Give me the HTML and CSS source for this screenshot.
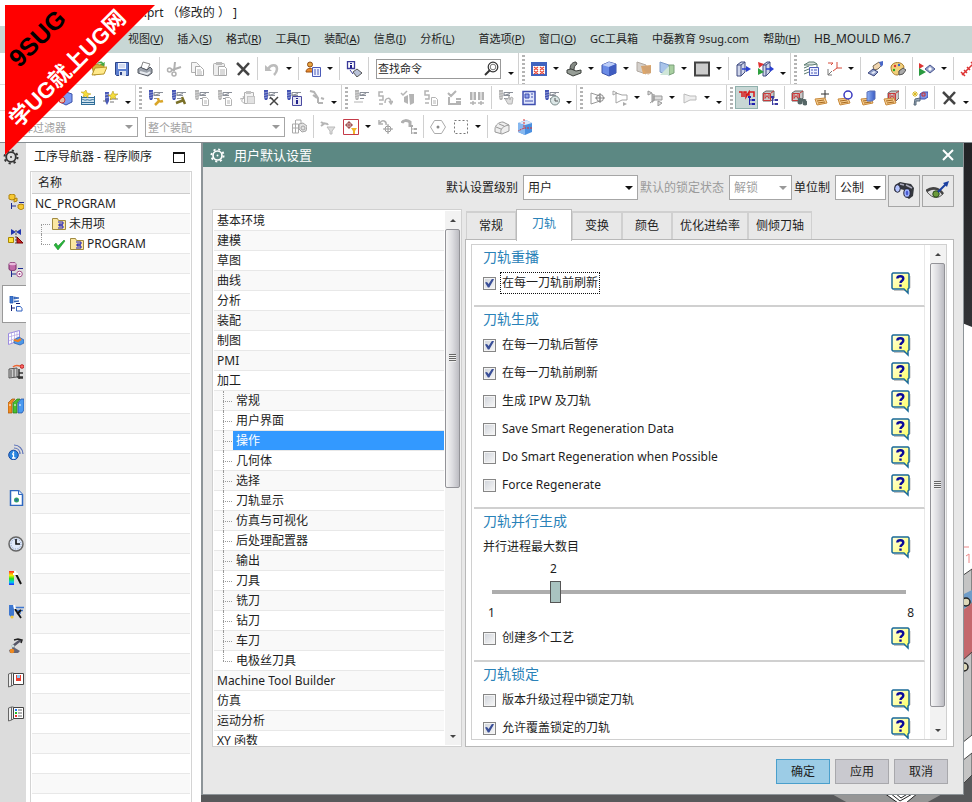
FILE: index.html
```html
<!DOCTYPE html>
<html lang="zh-CN">
<head>
<meta charset="utf-8">
<title>用户默认设置</title>
<link rel="stylesheet" href="styles.css">
</head>
<body>
<svg class="defs" aria-hidden="true">
  <defs>
    <linearGradient id="g-blue" x1="0" x2="1"><stop offset="0" stop-color="#8fb2f5"/><stop offset="1" stop-color="#3a5bc4"/></linearGradient>
    <linearGradient id="g-rain" x1="0" x2="0" y1="0" y2="1"><stop offset="0" stop-color="#f22"/><stop offset=".3" stop-color="#fe0"/><stop offset=".55" stop-color="#2d2"/><stop offset=".8" stop-color="#0ce"/><stop offset="1" stop-color="#22f"/></linearGradient>
    <linearGradient id="g-help" x1="0" x2="1" y1="0" y2="1"><stop offset="0" stop-color="#ffffe0"/><stop offset="1" stop-color="#ffff5c"/></linearGradient>
    <g id="tool"><path d="M1 0h4v8l-1 2H2L1 8z" fill="currentColor"/><path d="M1 3l4-1M1 5.500l4-1M1 8l4-1" stroke="#fff" stroke-opacity=".5" stroke-width=".8" fill="none"/><path d="M6 2.500h9M6 5.500h6M6 8.500h4M6 2.500v3l6-2" stroke="#8a8f98" stroke-width="1.200" fill="none"/></g>
    <g id="minidoc"><path d="M8.500 7.500h4l2 2v6h-6z" fill="#fff" stroke="currentColor"/><path d="M10 11h3M10 13h3" stroke="currentColor"/></g>
    <g id="card"><path d="M1 9l10-1 2 5-10 2z" fill="#f3c98a" stroke="#c98a3c"/><path d="M3 11l7-1M4 13l7-1" stroke="#a86a20" fill="none"/></g>
    <g id="redcube"><path d="M3 3l3-2h8v7l-3 3H3z" fill="#c9c9c9" stroke="#666"/><path d="M3.500 3.500h7v7h-7zM5 3.500v5l2-3 2 3v-5M11 3l3-2" fill="none" stroke="#c83a3a"/></g>
    <g id="twigs"><path d="M10.500 7v8M10.500 10h3M10.500 14h3" stroke="currentColor" fill="none"/><path d="M9 6h3v2H9zM13 9h3v2h-3zM13 13h3v2h-3z" fill="currentColor"/></g>
  </defs>
  <symbol id="i-folder" viewBox="0 0 16 16"><path d="M1 5l5-2 2 1 5-1v9L3 14z" fill="#d8b23a" stroke="#a98820"/><path d="M1 14l3-7 12-1-3 7z" fill="#ffe98a" stroke="#b8962a"/><path d="M6 3c2-3 5-3 6-1l2-1-1 4-4-1 2-1c-1-1-3-1-5 0z" fill="#43a843"/></symbol>
  <symbol id="i-save" viewBox="0 0 16 16"><path d="M1.500 1.500h13v13h-12l-1-1z" fill="#5c7fd0" stroke="#2d4488"/><path d="M4 2h8v6H4z" fill="#f4f7ff"/><path d="M5 4h6M5 6h6" stroke="#b4bfe0"/><path d="M5 10h7v5H5z" fill="#dfe5f2"/><path d="M6 11h2v3H6z" fill="#2d4488"/></symbol>
  <symbol id="i-print" viewBox="0 0 16 16"><path d="M6 1l7 2-3 6-6-2z" fill="#fff" stroke="#888"/><path d="M1 8l3-2 1 1 5 2 3-3 2 2v4l-4 3-10-3z" fill="#9da3ac" stroke="#555a63"/><path d="M3 11l7 2 3-2" fill="none" stroke="#e8ebf0" stroke-width="2"/></symbol>
  <symbol id="i-cut" viewBox="0 0 16 16"><path d="M9 1l-1 9M15 6L6 9" stroke="#b0b0b0" stroke-width="2"/><circle cx="3.500" cy="9" r="2" fill="none" stroke="#b0b0b0" stroke-width="1.500"/><circle cx="8" cy="13" r="2" fill="none" stroke="#b0b0b0" stroke-width="1.500"/></symbol>
  <symbol id="i-copy" viewBox="0 0 16 16"><path d="M2.500 1.500h5l3 3v7h-8z" fill="#f5f5f5" stroke="#b0b0b0"/><path d="M6.500 5.500h5l3 3v6h-8z" fill="#fff" stroke="#a8a8a8"/><path d="M8 9h4M8 11h5M8 13h5" stroke="#b5b5b5"/></symbol>
  <symbol id="i-paste" viewBox="0 0 16 16"><rect x="1.500" y="2.500" width="11" height="12" rx="1" fill="#eee" stroke="#b0b0b0"/><path d="M4 1h6v3H4z" fill="#bbb"/><path d="M6.500 5.500h6l2 2v7h-8z" fill="#fff" stroke="#a8a8a8"/><path d="M8 9h5M8 11h5M8 13h5" stroke="#b5b5b5"/></symbol>
  <symbol id="i-x" viewBox="0 0 16 16"><path d="M2 2l12 12M14 2L3 14" stroke="#444" stroke-width="2.500" fill="none"/></symbol>
  <symbol id="i-undo" viewBox="0 0 16 16"><path d="M4 8c3-5 9-5 9 0 0 2-1 4-3 6" fill="none" stroke="#bcbcbc" stroke-width="2.500"/><path d="M1 4v6h7z" fill="#bcbcbc"/></symbol>
  <symbol id="i-role" viewBox="0 0 16 16"><circle cx="5" cy="3.500" r="2.500" fill="#e8a33d" stroke="#8c4a15"/><path d="M1 11c0-5 8-5 8 0z" fill="#e78a2e" stroke="#9c5010"/><path d="M7.500 6.500h8v9h-8z" fill="#eef1ff" stroke="#4a5ab8"/><path d="M9 9h2M12 9h2M9 11h2M12 11h2M9 13h2M12 13h2" stroke="#4a5ab8"/></symbol>
  <symbol id="i-find" viewBox="0 0 16 16"><path d="M1.500.5h7v7h-7z" fill="#fff" stroke="#3a3a9a" stroke-width="1.300"/><path d="M5 2v1M5 4v3" stroke="#22228a" stroke-width="2"/><path d="M7 11l4-3 5 4-5 4z" fill="#b9c2d8" stroke="#555"/><path d="M4 9l3 4" stroke="#3a3a9a"/></symbol>
  <symbol id="i-search" viewBox="0 0 16 16"><circle cx="10" cy="6" r="4.800" fill="#fff" stroke="#333" stroke-width="1.200"/><circle cx="10" cy="6" r="2.800" fill="none" stroke="#777"/><path d="M7 9l-5 5" stroke="#333" stroke-width="2"/></symbol>
  <symbol id="i-win" viewBox="0 0 16 16"><path d="M0 1h16v14H0z" fill="#3f63bf"/><path d="M2 5h12v8H2z" fill="#fff"/><path d="M3 6l4 3M7 6L3 9M9 6l4 3M13 6L9 9M3 10l4 3M7 10l-4 3M9 10l4 3M13 10l-4 3" stroke="#e84a3a" stroke-width="1.300"/></symbol>
  <symbol id="i-seat" viewBox="0 0 16 16"><path d="M4 8c0-5 3-7 6-7l1 2c-2 1-3 3-3 6z" fill="#858b85" stroke="#444"/><path d="M1 9l4-1 5 2 5-1v3l-8 3-6-3z" fill="#969d96" stroke="#3c403c"/></symbol>
  <symbol id="i-cube" viewBox="0 0 16 16"><path d="M1 4l7-3 7 2v9l-7 3-7-3z" fill="#6a8be6" stroke="#3c52a8"/><path d="M1 4l7 2 7-3-7-2z" fill="#bccdf8"/><path d="M8 6v9l7-3V3z" fill="#3f5cc0"/></symbol>
  <symbol id="i-plane1" viewBox="0 0 16 16"><path d="M1 1l9 3v9l-9-3z" fill="#d4d0cc" stroke="#b0a8a0"/><path d="M5 5l10-1v8L7 13z" fill="#dfa76a"/><path d="M5 5l7 9 3-2V5z" fill="#c9a078" opacity=".6"/></symbol>
  <symbol id="i-plane2" viewBox="0 0 16 16"><path d="M1 1l9 3v10l-9-3z" fill="#a9c4ea" stroke="#7a98c8"/><path d="M15 4v8l-5 2V4z" fill="#a8cfa0" stroke="#7aa07a"/><path d="M1 14L10 5v9z" fill="#cfe6d8"/></symbol>
  <symbol id="i-square" viewBox="0 0 16 16"><path d="M1 1.500h14v13H1z" fill="#ccc" stroke="#444" stroke-width="2"/></symbol>
  <symbol id="i-boxarrow" viewBox="0 0 16 16"><path d="M2 4l4-3h4v10l-4 4H2z" fill="#d0d6ea" stroke="#3f4a80"/><path d="M2 4h4v11M6 4l4-3" fill="none" stroke="#3f4a80"/><path d="M7 8h5" stroke="#2a3fd0" stroke-width="1.500"/><path d="M11 5l5 3-5 3z" fill="#2a3fd0"/></symbol>
  <symbol id="i-boxflag" viewBox="0 0 16 16"><path d="M5 4l4-3h3v10l-4 4H5z" fill="#d0d6ea" stroke="#3f4a80"/><path d="M5 4h3v11M8 4l4-3" fill="none" stroke="#3f4a80"/><path d="M0 1l6 2-5 4z" fill="#e03030"/><path d="M0 7l6 4-6 3z" fill="#2fa040"/><path d="M8 8h5" stroke="#2a3fd0" stroke-width="1.500"/><path d="M12 5l4 3-4 3z" fill="#2a3fd0"/></symbol>
  <symbol id="i-layers" viewBox="0 0 16 16"><path d="M1 4l5-3h5l3 2-5 1zM1 7l5-2M1 10l5-2M1 13l5-2M14 3v3" fill="#d7e0dc" stroke="#5a7a70"/><path d="M6.500 6.500h9v8h-9z" fill="#eef1ff" stroke="#4a5ab8"/><path d="M8 9h2M11 9h3M8 12h2M11 12h3" stroke="#4a5ab8"/></symbol>
  <symbol id="i-csys" viewBox="0 0 16 16"><path d="M2 8v6h4M2 14l4-4" fill="none" stroke="#777"/><path d="M2 2h5l-2 2M11 1v6h5M11 7l-4 3" fill="none" stroke="#d44a3a"/></symbol>
  <symbol id="i-handgem" viewBox="0 0 16 16"><path d="M6 5l6-4 3 3-4 4-4 1z" fill="#f1d6b0" stroke="#7a6a50"/><path d="M12 1l4-1v4l-2 2z" fill="#4a68c8"/><path d="M1 12l5-4 5 3-4 4z" fill="#8f9fc9" stroke="#3f4a80"/><path d="M4 12l3-2 2 1-3 2z" fill="#e8ecf8"/></symbol>
  <symbol id="i-palette" viewBox="0 0 16 16"><path d="M1 6c1-6 12-6 13 0 0 3-4 2-5 4s1 4-2 4C3 14 1 10 1 6z" fill="#f2cf7a" stroke="#a87a2a"/><circle cx="5" cy="5" r="1.200" fill="#d33"/><circle cx="9" cy="4" r="1.200" fill="#36c"/><circle cx="4" cy="9" r="1.200" fill="#2a2"/><path d="M9 10l4-3 3 2-3 4-4 1z" fill="#aaa" stroke="#555"/></symbol>
  <symbol id="i-trigem" viewBox="0 0 16 16"><path d="M0 2l5 3-5 3z" fill="#d33"/><path d="M0 7l7 4-7 4z" fill="#2a9a40"/><path d="M6 8l5-4 5 4-5 4z" fill="#9aa6cc" stroke="#4a5690"/><path d="M9 8l2-2 2 2-2 2z" fill="#fff"/></symbol>
  <symbol id="i-measure" viewBox="0 0 16 16"><path d="M2 14L14 2M1 11l4 4M11 1l4 4M4 9l3 3M7 6l3 3" stroke="#d33" stroke-width="1.500" fill="none"/></symbol>

  <symbol id="i-cubeop" viewBox="0 0 16 16"><path d="M3 4l6-2 6 2v8l-6 3-6-3z" fill="#7d9af0" stroke="#3c52a8"/><circle cx="5" cy="10" r="3" fill="#e9b9a0" stroke="#c33"/></symbol>
  <symbol id="i-starframe" viewBox="0 0 16 16"><path d="M1 7h14v8H1z" fill="#cfe2ee"/><path d="M1 7.500h14M1 10c2-2 3 1 5 0s3 1 5 0 3 0 4 0M1 12.500h14M1 14.500h14M1.500 6v9M14.500 6v9" stroke="#2f6d98" fill="none"/><path d="M6 0l1 3 4 1-3 1 0 3-2-2-3 1 1-3-3-2h3z" fill="#f5dd3c" stroke="#b89a10" stroke-width=".5"/></symbol>
  <symbol id="i-startool" viewBox="0 0 16 16"><path d="M2 2h4v9l-2 4-2-4z" fill="#4a5ab8"/><path d="M2 5l4-1M2 8l4-1" stroke="#fff" opacity=".5"/><path d="M7 9h8M7 12h4M0 11h3" stroke="#777" stroke-width="1.200"/><path d="M10 1l1 3 4 0-3 2 1 3-3-1-3 2 1-3-3-2h3z" fill="#f5dd3c" stroke="#a88a10" stroke-width=".5"/></symbol>
  <symbol id="i-toolwrench" viewBox="0 0 16 16"><use href="#tool"/><path d="M7 15l5-5M10 8c0 3 2 4 5 3" stroke="#d9a528" stroke-width="2.500" fill="none"/></symbol>
  <symbol id="i-toolaxe" viewBox="0 0 16 16"><use href="#tool"/><path d="M5 13l8-3M11 7l3 7" stroke="#7a7028" stroke-width="2.500" fill="none"/></symbol>
  <symbol id="i-tooldoc" viewBox="0 0 16 16"><use href="#tool"/><use href="#minidoc"/></symbol>
  <symbol id="i-pasteback" viewBox="0 0 16 16"><path d="M4.500 2.500h9v11h-9z" fill="#f4f4f4" stroke="#b0b0b0"/><path d="M6 1h5v3H6zM7 6h8v8H7z" fill="#c4c4c4"/><path d="M8 8h6M8 10h6M8 12h6" stroke="#fff"/><path d="M5 13c-4 0-4-4-1-5l-1-2M0 9l4-1" stroke="#b0b0b0" fill="none"/></symbol>
  <symbol id="i-toolx" viewBox="0 0 16 16"><use href="#tool"/><path d="M7 7l8 8M15 7l-8 8" stroke="#444" stroke-width="1.500"/></symbol>
  <symbol id="i-toolinfo" viewBox="0 0 16 16"><use href="#tool"/><path d="M6.500 6.500h9v9h-9z" fill="#e6e6f4" stroke="#4a4aa0"/><path d="M11 8v1M11 10v4" stroke="#22228a" stroke-width="2"/></symbol>
  <symbol id="i-path" viewBox="0 0 16 16"><path d="M1 1l4 1 4 6v5M4 5l4 3M9 13h5M12 8l3 1" fill="none" stroke="currentColor" stroke-width="2"/></symbol>
  <symbol id="i-tool" viewBox="0 0 16 16"><use href="#tool"/><path d="M0 12h9" stroke="currentColor"/></symbol>
  <symbol id="i-five" viewBox="0 0 16 16"><path d="M6 2H2v4h4v4H2M2 14h4" fill="none" stroke="currentColor" stroke-width="1.500"/><path d="M8 13c0-6 6-6 6-1M12 11l2 3 2-3" fill="none" stroke="currentColor" stroke-width="1.500"/></symbol>
  <symbol id="i-checkbox" viewBox="0 0 16 16"><path d="M1 3l2 2 4-4" fill="none" stroke="currentColor" stroke-width="1.500"/><path d="M4 7l4-2v9l-4-2zM9 4h5v9l-4 2z" fill="currentColor"/></symbol>
  <symbol id="i-fivedoc" viewBox="0 0 16 16"><path d="M6 1H2v4h4v4H2M2 13h4" fill="none" stroke="currentColor" stroke-width="1.500"/><use href="#minidoc"/></symbol>
  <symbol id="i-checkbars" viewBox="0 0 16 16"><path d="M2 3l3 3 5-5M3 7v7h5M10 9h5M10 12h5M8 14h7" fill="none" stroke="currentColor" stroke-width="2"/></symbol>
  <symbol id="i-split" viewBox="0 0 16 16"><path d="M1 2h6v8H1zM9 2h6v8H9z" fill="currentColor"/><path d="M4 2v8M12 2v8" stroke="#fff"/><path d="M1 13h6M9 13h6M4 11v4M12 11v4" stroke="currentColor" stroke-width="1.500"/></symbol>
  <symbol id="i-toolhand" viewBox="0 0 16 16"><use href="#tool"/><path d="M7 9l3 5h4l1-6-2-1-1 3-1-4-1 3z" fill="#ddd" stroke="currentColor"/></symbol>
  <symbol id="i-docblue" viewBox="0 0 16 16"><path d="M2 1.500h12v13H2z" fill="#dfe5fb" stroke="#3f4fb0" stroke-width="1.500"/><path d="M4 4h4v4H4zM10 4h2M10 7h2M4 11h8" stroke="#3f4fb0" fill="#8ea0ea"/></symbol>
  <symbol id="i-toolclock" viewBox="0 0 16 16"><use href="#tool"/><circle cx="11" cy="10.500" r="4.500" fill="#dbe6e6" stroke="#7a8a8a"/><path d="M11 8v3h3" stroke="#555" fill="none"/></symbol>
  <symbol id="i-tritarget" viewBox="0 0 16 16"><path d="M2 3l9 3v5l-9 3z" fill="none" stroke="#999"/><circle cx="11" cy="8" r="3.500" fill="none" stroke="#888"/><path d="M11 3v10M6 8h10" stroke="#888"/></symbol>
  <symbol id="i-triplay" viewBox="0 0 16 16"><path d="M1 1l4 2-4 2zM4 3l6 2h5v5h-5l-6 3z" fill="#fff" stroke="#a5a5a5"/><path d="M11 12l4 2-4 2z" fill="#aaa"/></symbol>
  <symbol id="i-cup" viewBox="0 0 16 16"><path d="M1 1l4 2-4 2zM5 4h1v8H5zM7 6h8v4H7zM11 11l4 2-4 3z" fill="#ddd" stroke="#999"/><path d="M3 13l4-3M7 4v7" stroke="#999"/></symbol>
  <symbol id="i-tri" viewBox="0 0 16 16"><path d="M2 4l6 2h6v4H8l-6 3z" fill="#eee" stroke="#bbb"/></symbol>
  <symbol id="i-redpath" viewBox="0 0 16 16"><path d="M0 2h3v5M5 7V2h2v5l3-5v5M10 2h5v5" fill="none" stroke="#d81818" stroke-width="1.500"/><g color="#2020b0"><use href="#twigs"/></g></symbol>
  <symbol id="i-redtree" viewBox="0 0 16 16"><g transform="translate(-2 0)"><use href="#redcube"/></g><g color="#3a3aa0"><use href="#twigs"/></g></symbol>
  <symbol id="i-redbino" viewBox="0 0 16 16"><g transform="translate(-2 0)"><use href="#redcube"/></g><circle cx="9" cy="12" r="2.500" fill="#566"/><circle cx="14" cy="13" r="2.500" fill="#566"/><path d="M7 9l8 2" stroke="#566" stroke-width="3"/></symbol>
  <symbol id="i-cardplus" viewBox="0 0 16 16"><path d="M11 0v8M7 4h8" stroke="#333"/><use href="#card"/></symbol>
  <symbol id="i-cardring" viewBox="0 0 16 16"><use href="#card"/><circle cx="11" cy="5" r="4" fill="#fff" stroke="#3a3ac0" stroke-width="1.500"/></symbol>
  <symbol id="i-cardcube" viewBox="0 0 16 16"><use href="#card"/><path d="M7 2l3-1h5v8l-3 2H7z" fill="url(#g-blue)" stroke="#5a70b8"/></symbol>
  <symbol id="i-cardred" viewBox="0 0 16 16"><g transform="translate(2 0)"><use href="#redcube"/></g><use href="#card"/></symbol>
  <symbol id="i-starcube" viewBox="0 0 16 16"><path d="M8 4l3-2h5v5l-3 2H8z" fill="#7d92e4" stroke="#3f4fb0"/><path d="M3 9l5-1v3H4v4H2z" fill="#9ab" stroke="#567"/><path d="M3 1v6M0 4h6M1 2l4 4M5 2L1 6" stroke="#d8b820"/><path d="M10 3h3v3h-3z" fill="none" stroke="#c33"/></symbol>

  <symbol id="i-boxes" viewBox="0 0 16 16"><path d="M1.500 5h6v9h-6zM5 1h5v5M1 9h7M4.500 1v13" fill="none" stroke="#aaa"/><path d="M8 5l4-1 4 3-1 5-4 1-3-3z" fill="#e4e4e4" stroke="#a5a5a5"/><circle cx="12" cy="9" r="2" fill="none" stroke="#a5a5a5"/></symbol>
  <symbol id="i-funnel" viewBox="0 0 16 16"><path d="M1 3c3 3 6 0 7 3M1 7l4-3" stroke="#b5b5b5" stroke-width="2" fill="none"/><path d="M7 8h8l-3 4v3h-2v-3z" fill="#ddd" stroke="#bbb"/></symbol>
  <symbol id="i-redfunnel" viewBox="0 0 16 16"><path d="M.5.5h15v15H.5z" fill="#fff" stroke="#c43a48"/><path d="M6 2v8M2 6h8" stroke="#944"/><circle cx="6" cy="6" r="2.500" fill="none" stroke="#944"/><path d="M8 9h6l-2 3v3h-2v-3z" fill="#f0b429"/></symbol>
  <symbol id="i-target" viewBox="0 0 16 16"><path d="M2 4c2-4 7-2 6 2M1 1v4h4" fill="none" stroke="#b0b0b0" stroke-width="1.500"/><circle cx="10" cy="10" r="3" fill="none" stroke="#999"/><path d="M10 5v10M5 10h10" stroke="#999"/></symbol>
  <symbol id="i-tree" viewBox="0 0 16 16"><path d="M1 4c1-3 5-3 8-1v5" fill="none" stroke="#b0b0b0" stroke-width="3"/><g color="#aaa"><use href="#twigs"/></g></symbol>
  <symbol id="i-hex" viewBox="0 0 16 16"><path d="M4.500 1.500h7l4 6.500-4 6.500h-7L.5 8z" fill="none" stroke="#aaa"/><circle cx="8" cy="8" r="1.500" fill="#888"/></symbol>
  <symbol id="i-dash" viewBox="0 0 16 16"><path d="M1.500 1.500h13v13h-13z" fill="none" stroke="#777" stroke-dasharray="2 2"/></symbol>
  <symbol id="i-shell" viewBox="0 0 16 16"><path d="M1 10c0-4 4-7 8-7l6 3v6l-7 3-7-2zM7 14c-1-4 2-7 8-8M5 5l5 2M2 8l5 2" fill="#eee" stroke="#999"/></symbol>
  <symbol id="i-bluecube" viewBox="0 0 16 16"><path d="M1 4l8-3 6 3v9l-7 3-7-3z" fill="#4a90e0"/><path d="M1 4l7 2 7-2-6-3z" fill="#dbe9fb"/><path d="M1 4l7 2v10l-7-3z" fill="#86b8f0"/><path d="M7 0v9h8M7 9l-6 3" fill="none" stroke="#d33" stroke-dasharray="2 1"/></symbol>

  <symbol id="i-gear" viewBox="0 0 16 16"><circle cx="8" cy="8" r="4.800" fill="none" stroke="currentColor" stroke-width="1.800"/><circle cx="8" cy="8" r="6.500" fill="none" stroke="currentColor" stroke-width="2" stroke-dasharray="2.200 2.900"/><circle cx="8" cy="8" r="1" fill="currentColor"/></symbol>
  <symbol id="i-asm" viewBox="0 0 16 16"><path d="M1 1l3-1 3 1v4l-3 1-3-1zM6 5l3-1v3l-3 1zM10 11l3-1 3 1v3l-3 2-3-2z" fill="#f6c832" stroke="#b08410"/><path d="M3.500 9v6M3.500 12H8M11 8.500h5" stroke="#1c2a90" fill="none"/></symbol>
  <symbol id="i-constr" viewBox="0 0 16 16"><path d="M3 1l5 3-5 3zM13 1L8 4l5 3z" fill="#2236b0"/><path d="M.5 9.500h5v5h-5z" fill="#ffe23a" stroke="#a80"/><path d="M9 9l6 6H9z" fill="#c22" stroke="#700"/><path d="M8 2v14" stroke="#444" stroke-dasharray="2 1"/></symbol>
  <symbol id="i-part" viewBox="0 0 16 16"><path d="M1 2c0-2 7-2 7 0v5c0 2-7 2-7 0z" fill="#c06aa8" stroke="#7a2a68"/><ellipse cx="4.500" cy="2" rx="3.500" ry="1.200" fill="#e9b9dc"/><path d="M3.500 9v6M3.500 12H8M10 6.500h5" stroke="#1c2a90"/><circle cx="11.500" cy="12" r="2.800" fill="#fff" stroke="#a04a88"/><circle cx="11.500" cy="12" r="1" fill="#a04a88"/></symbol>
  <symbol id="i-opnav" viewBox="0 0 16 16"><path d="M2 0h3v7H2zM6 1l5 1-5 1zM6 5l5 0-5 1" fill="#3f78d0" stroke="#2a5ab0" stroke-width=".8"/><path d="M3.500 9v6M3.500 12H7M8 7.500h4" stroke="#111c70"/><path d="M8.500 10.500h4l1.500 2v2.500H8.500z" fill="#fff" stroke="#3060c0"/></symbol>
  <symbol id="i-mesh" viewBox="0 0 16 16"><path d="M.5 3.500l11-3v10l-11 4z" fill="#fff" stroke="#9a8ae0"/><path d="M3.500 3v10M6.500 2v10M9 1v10M.5 7l11-3M.5 11l11-4" fill="none" stroke="#b0a4e4" stroke-width=".7"/><path d="M6 10l5-3 5 3v3l-4 2-6-2z" fill="#4a98e8" stroke="#2a5ab0" stroke-width=".7"/><path d="M6 10l4 1 3-2" stroke="#f08020" stroke-width="2.200" fill="none"/></symbol>
  <symbol id="i-mach" viewBox="0 0 16 16"><path d="M1 5l8-1v9l-8 1zM3 6v7M6 5v8" fill="#ccc" stroke="#555"/><path d="M11 5v10M11 9h4M11 14h4M9 13h6" stroke="#333" stroke-width="1.500"/><circle cx="14" cy="2.500" r="1.800" fill="#f66" stroke="#b22"/><path d="M5 3c2-2 4-2 7-1" stroke="#e63" stroke-width="1.500" fill="none"/></symbol>
  <symbol id="i-books" viewBox="0 0 16 16"><path d="M0 5l4-4h3L4 5v10H0z" fill="#f08a20" stroke="#a05008" stroke-width=".7"/><path d="M5 5l4-4h3L9 5v10H5z" fill="#48c030" stroke="#2a7a18" stroke-width=".7"/><path d="M10 5l3-4h3v11l-2 3h-4z" fill="#4a9af0" stroke="#1a4aa0" stroke-width=".7"/><path d="M1 7h2M6 7h2M11 7h2" stroke="#fff"/></symbol>
  <symbol id="i-info" viewBox="0 0 16 16"><circle cx="5.500" cy="11" r="4.800" fill="#2a86e0" stroke="#1a4aa0"/><path d="M5.500 7.500v1.500M4 10h1.500v4M4 14h3.500" stroke="#fff" stroke-width="1.300" fill="none"/><path d="M6 4c4 0 6 3 6 6M6 1c5 0 9 4 9 9" fill="none" stroke="#5a70b8" stroke-width="1.200"/></symbol>
  <symbol id="i-page" viewBox="0 0 16 16"><path d="M2.500.5h8l4 4v11h-12z" fill="#fff" stroke="#2f68c0" stroke-width="1.500"/><path d="M10.500.5v4h4" fill="#dfe8f8" stroke="#2f68c0"/><circle cx="8.500" cy="10" r="2.500" fill="#2fa068"/><circle cx="8.500" cy="10" r="1" fill="#2a50c0"/></symbol>
  <symbol id="i-clock" viewBox="0 0 16 16"><circle cx="8" cy="8" r="7" fill="#dfe8f8" stroke="#666" stroke-width="1.500"/><circle cx="8" cy="8" r="5" fill="none" stroke="#7a90b8" stroke-dasharray="1 1.600"/><path d="M8 3v5h4" stroke="#111" stroke-width="1.600" fill="none"/></symbol>
  <symbol id="i-rain" viewBox="0 0 16 16"><path d="M1 1h5v14H1z" fill="url(#g-rain)"/><path d="M8 4l5 10" stroke="#111" stroke-width="2"/><path d="M7 1l1 3M5 4h5" stroke="#fff" stroke-width="2"/></symbol>
  <symbol id="i-wiz" viewBox="0 0 16 16"><path d="M1 1h5v10l-2 3-3-3z" fill="#3f78d0"/><path d="M7 3.500h9M7 6.500h8M9 9h4" stroke="#3f78d0" stroke-width="1.500"/><path d="M7 5l6 9M13 6l-4 4" stroke="#111" stroke-width="1.800"/><circle cx="4" cy="13" r="1.500" fill="#f3c83a"/><path d="M6 1l1 4" stroke="#fff" stroke-width="2"/></symbol>
  <symbol id="i-robot" viewBox="0 0 16 16"><path d="M6 13L5 8l5-4 3-2" fill="none" stroke="#556" stroke-width="2.500"/><path d="M6 2l4-1 4 1-1 3" stroke="#222" fill="none" stroke-width="1.500"/><path d="M1 12l6-2 5 3-2 2H2z" fill="#667"/><circle cx="5" cy="8" r="1.500" fill="#cdd"/><circle cx="4" cy="13" r="2.300" fill="#f08a20"/></symbol>
  <symbol id="i-cards1" viewBox="0 0 16 16"><path d="M.5 2l3-1v13l-3 1zM3.500 1l2 0v12l-2 1" fill="#eee" stroke="#666"/><path d="M5.500 1.500h10v11h-10z" fill="#fff" stroke="#444"/><path d="M8 3h5v6H8z" fill="#e84030"/><path d="M9 3h3v3H9z" fill="#8ac8f8"/></symbol>
  <symbol id="i-cards2" viewBox="0 0 16 16"><path d="M.5 2l3-1v13l-3 1zM3.500 1l2 0v12l-2 1" fill="#eee" stroke="#666"/><path d="M5.500 1.500h10v11h-10z" fill="#fff" stroke="#444"/><path d="M7 3h2v2H7z" fill="#27e"/><path d="M7 6h2v2H7z" fill="#2b2"/><path d="M7 9h2v2H7z" fill="#e33"/><path d="M10 4h4M10 7h4M10 10h4" stroke="#666"/></symbol>

  <symbol id="i-prog" viewBox="0 0 16 16"><path d="M1.500 2.500h5l1 2h7v9h-13z" fill="#fbe7a2" stroke="#a08a40"/><path d="M7 6h5v2H8v2h4v2H7M8 9h4" fill="none" stroke="#1c1cc0"/></symbol>
  <symbol id="i-check" viewBox="0 0 16 16"><path d="M3 9l2-2 2 3 6-6 1 1-7 9z" fill="#27b53a" stroke="#128020" stroke-width=".5"/></symbol>
  <symbol id="i-help" viewBox="0 -1 20 24"><path d="M3 18.500h11M19 4v12" stroke="#aaa" fill="none" opacity=".7"/><path d="M1 2l1-1h15l1 1v14l-1 1v4l-4-4H2l-1-1z" fill="url(#g-help)" stroke="#1a6a98" stroke-width="1.500"/><path d="M6.300 6.500c.3-3 6-3 6 .2 0 2-2.800 2-2.800 4.300M9.500 12.500v2.200" fill="none" stroke="#0a0a9a" stroke-width="2.400"/></symbol>
  <symbol id="i-bino" viewBox="0 0 24 24"><path d="M3 6l5-3 5 1 6 1 3 4-1 8-4 3-4-3-1-6-4-1-4 3-2-2z" fill="#34373d"/><path d="M8 5l4 1M14 6l6 3" stroke="#aab" stroke-width="1.500"/><ellipse cx="5.500" cy="9.500" rx="2.800" ry="3.800" fill="#b4c4ff" stroke="#223"/><ellipse cx="15" cy="14" rx="3.200" ry="4.300" fill="#a0b4ff" stroke="#223"/><ellipse cx="15" cy="14" rx="1.300" ry="2.200" fill="#4a5ad0"/></symbol>
  <symbol id="i-eye" viewBox="0 0 24 24"><path d="M1 13c5-4 11-4 16 2-5 5-10 5-16-2z" fill="#ddd" stroke="#555"/><path d="M0 12c6-5 13-3 17 3" fill="none" stroke="#444" stroke-width="2.500"/><circle cx="10" cy="15" r="3.200" fill="#6a9a3a" stroke="#2a4a1a"/><path d="M12 13l8-8" stroke="#1a3fa0" stroke-width="2"/><path d="M23 2l-2 6-4-4z" fill="#1a3fa0"/></symbol>
</svg>

<header class="title-bar"><h1>H8.prt （修改的 ） ]</h1></header>

<nav class="menu-bar">
  <a href="#">视图(<u>V</u>)</a>
  <a href="#">插入(<u>S</u>)</a>
  <a href="#">格式(<u>R</u>)</a>
  <a href="#">工具(<u>T</u>)</a>
  <a href="#">装配(<u>A</u>)</a>
  <a href="#">信息(<u>I</u>)</a>
  <a href="#">分析(<u>L</u>)</a>
  <a href="#" class="wide">首选项(<u>P</u>)</a>
  <a href="#">窗口(<u>O</u>)</a>
  <a href="#">GC工具箱</a>
  <a href="#">中磊教育 9sug.com</a>
  <a href="#">帮助(<u>H</u>)</a>
  <a href="#" class="latin">HB_MOULD M6.7</a>
</nav>

<div class="toolbar bar-standard" role="toolbar" aria-label="标准">
  <button class="tb"><svg><use href="#i-folder"/></svg></button>
  <button class="tb"><svg><use href="#i-save"/></svg></button>
  <button class="tb"><svg><use href="#i-print"/></svg></button>
  <i class="sep"></i>
  <button class="tb"><svg><use href="#i-cut"/></svg></button>
  <button class="tb"><svg><use href="#i-copy"/></svg></button>
  <button class="tb"><svg><use href="#i-paste"/></svg></button>
  <button class="tb"><svg><use href="#i-x"/></svg></button>
  <i class="sep"></i>
  <button class="tb"><svg><use href="#i-undo"/></svg></button><button class="caret"></button>
  <i class="sep"></i>
  <button class="tb"><svg><use href="#i-role"/></svg></button><button class="caret"></button>
  <i class="sep"></i>
  <button class="tb"><svg><use href="#i-find"/></svg></button>
  <i class="sep"></i>
  <div class="search"><input type="text" value="查找命令" aria-label="查找命令"><svg><use href="#i-search"/></svg></div>
  <button class="caret low"></button>
  <i class="grip"></i>
  <button class="tb"><svg><use href="#i-win"/></svg></button><button class="caret"></button>
  <button class="tb"><svg><use href="#i-seat"/></svg></button><button class="caret"></button>
  <button class="tb"><svg><use href="#i-cube"/></svg></button><button class="caret"></button>
  <button class="tb"><svg><use href="#i-plane1"/></svg></button>
  <button class="tb"><svg><use href="#i-plane2"/></svg></button><button class="caret"></button>
  <button class="tb"><svg><use href="#i-square"/></svg></button><button class="caret"></button>
  <i class="sep"></i>
  <button class="tb"><svg><use href="#i-boxarrow"/></svg></button>
  <button class="tb"><svg><use href="#i-boxflag"/></svg></button><button class="caret low"></button>
  <i class="grip"></i>
  <button class="tb"><svg><use href="#i-layers"/></svg></button>
  <button class="tb"><svg><use href="#i-csys"/></svg></button><button class="caret"></button>
  <i class="sep"></i>
  <button class="tb"><svg><use href="#i-handgem"/></svg></button>
  <button class="tb"><svg><use href="#i-palette"/></svg></button>
  <i class="sep"></i>
  <button class="tb"><svg><use href="#i-trigem"/></svg></button><button class="caret"></button>
  <i class="sep"></i>
  <button class="tb"><svg><use href="#i-measure"/></svg></button>
</div>

<div class="toolbar bar-cam" role="toolbar" aria-label="加工">
  <button class="tb"><svg><use href="#i-cubeop"/></svg></button>
  <button class="tb"><svg><use href="#i-starframe"/></svg></button>
  <button class="tb"><svg><use href="#i-startool"/></svg></button><button class="caret low"></button>
  <i class="grip"></i>
  <button class="tb"><svg><use href="#i-toolwrench"/></svg></button>
  <button class="tb"><svg><use href="#i-toolaxe"/></svg></button>
  <button class="tb off"><svg><use href="#i-tooldoc"/></svg></button>
  <button class="tb off"><svg><use href="#i-tooldoc"/></svg></button>
  <button class="tb off"><svg><use href="#i-pasteback"/></svg></button>
  <button class="tb"><svg><use href="#i-toolx"/></svg></button>
  <button class="tb"><svg><use href="#i-toolinfo"/></svg></button>
  <button class="tb off"><svg><use href="#i-path"/></svg></button><button class="caret low"></button>
  <i class="grip"></i>
  <button class="tb off"><svg><use href="#i-tool"/></svg></button>
  <button class="tb off"><svg><use href="#i-five"/></svg></button>
  <button class="tb off"><svg><use href="#i-checkbox"/></svg></button>
  <button class="tb off"><svg><use href="#i-fivedoc"/></svg></button>
  <button class="tb off"><svg><use href="#i-checkbars"/></svg></button>
  <button class="tb off"><svg><use href="#i-split"/></svg></button>
  <i class="sep"></i>
  <button class="tb off"><svg><use href="#i-toolhand"/></svg></button>
  <button class="tb"><svg><use href="#i-docblue"/></svg></button>
  <button class="tb"><svg><use href="#i-toolclock"/></svg></button><button class="caret low"></button>
  <i class="grip"></i>
  <button class="tb"><svg><use href="#i-tritarget"/></svg></button>
  <button class="tb"><svg><use href="#i-triplay"/></svg></button><button class="caret"></button>
  <button class="tb"><svg><use href="#i-cup"/></svg></button><button class="caret"></button>
  <button class="tb"><svg><use href="#i-tri"/></svg></button><button class="caret"></button>
  <button class="caret low"></button>
  <i class="grip"></i>
  <button class="tb active"><svg><use href="#i-redpath"/></svg></button>
  <button class="tb"><svg><use href="#i-redtree"/></svg></button>
  <i class="sep"></i>
  <button class="tb"><svg><use href="#i-redbino"/></svg></button>
  <button class="tb"><svg><use href="#i-cardplus"/></svg></button>
  <button class="tb"><svg><use href="#i-cardring"/></svg></button>
  <button class="tb"><svg><use href="#i-cardcube"/></svg></button>
  <button class="tb"><svg><use href="#i-cardred"/></svg></button>
  <i class="sep"></i>
  <button class="tb"><svg><use href="#i-starcube"/></svg></button>
  <i class="sep"></i>
  <button class="tb"><svg><use href="#i-x"/></svg></button><button class="caret low"></button>
</div>

<div class="toolbar bar-select" role="toolbar" aria-label="选择">
  <div class="select-box filter"><select disabled aria-label="过滤器"><option>选择过滤器</option></select></div>
  <div class="select-box scope"><select disabled aria-label="范围"><option>整个装配</option></select></div>
  <button class="tb"><svg><use href="#i-boxes"/></svg></button>
  <i class="sep"></i>
  <button class="tb"><svg><use href="#i-funnel"/></svg></button>
  <button class="tb"><svg><use href="#i-redfunnel"/></svg></button><button class="caret"></button>
  <button class="tb"><svg><use href="#i-target"/></svg></button>
  <button class="tb"><svg><use href="#i-tree"/></svg></button>
  <i class="sep"></i>
  <button class="tb"><svg><use href="#i-hex"/></svg></button>
  <button class="tb"><svg><use href="#i-dash"/></svg></button><button class="caret"></button>
  <i class="sep"></i>
  <button class="tb"><svg><use href="#i-shell"/></svg></button>
  <button class="tb"><svg><use href="#i-bluecube"/></svg></button>
</div>

<main class="workspace">
  <nav class="rail">
    <button class="rail-gear"><svg><use href="#i-gear"/></svg></button>
    <button><svg><use href="#i-asm"/></svg></button>
    <button><svg><use href="#i-constr"/></svg></button>
    <button><svg><use href="#i-part"/></svg></button>
    <button class="current"><svg><use href="#i-opnav"/></svg></button>
    <button><svg><use href="#i-mesh"/></svg></button>
    <button><svg><use href="#i-mach"/></svg></button>
    <button><svg><use href="#i-books"/></svg></button>
    <button class="apart"><svg><use href="#i-info"/></svg></button>
    <button class="apart"><svg><use href="#i-page"/></svg></button>
    <button class="apart"><svg><use href="#i-clock"/></svg></button>
    <button><svg><use href="#i-rain"/></svg></button>
    <button><svg><use href="#i-wiz"/></svg></button>
    <button><svg><use href="#i-robot"/></svg></button>
    <button><svg><use href="#i-cards1"/></svg></button>
    <button><svg><use href="#i-cards2"/></svg></button>
  </nav>

  <section class="navigator">
    <header><h2>工序导航器 - 程序顺序</h2><button class="maximize" aria-label="最大化"></button></header>
    <div class="nav-box">
      <table>
        <thead><tr><th>名称</th></tr></thead>
        <tbody>
          <tr><td>NC_PROGRAM</td></tr>
          <tr class="node"><td><span><svg><use href="#i-prog"/></svg>未用项</span></td></tr>
          <tr class="node last"><td><span><svg><use href="#i-check"/></svg><svg><use href="#i-prog"/></svg>PROGRAM</span></td></tr>
        </tbody>
      </table>
      <div class="nav-rest"></div>
    </div>
  </section>

  <div class="viewport">
    <svg class="model" viewBox="0 0 200 660" aria-hidden="true">
      <linearGradient id="g-sky" x1="0" x2="0" y1="0" y2="1"><stop offset="0" stop-color="#222326"/><stop offset="1" stop-color="#323336"/></linearGradient>
      <path d="M0 0h200v660H0z" fill="#58595b"/>
      <path d="M150 0h50v184l-50-18z" fill="url(#g-sky)"/>
      <path d="M190 180l10 4v420l-10 7z" fill="#fff"/>
      <path d="M190 433l10-7v166l-10 8z" fill="#c4c4c4" stroke="#444"/>
      <path d="M190 452l10-5v12l-10 9z" fill="#6f9cc8"/>
      <path d="M190 468l10-8v50l-10 8z" fill="#c4686c"/>
      <path d="M190 518l10-9" stroke="#444"/>
      <circle cx="194" cy="459" r="4" fill="#ddd8b8" stroke="#222" stroke-width="1.500"/>
      <circle cx="192" cy="524" r="4" fill="#ddd8b8" stroke="#222" stroke-width="1.500"/>
      <path d="M192 404h5M194 413l3-2v9" fill="none" stroke="#e88"/>
      <path d="M190 607l10-8v14l-10 20z" fill="#fff"/>
      <path d="M190 618l10-8v22l-10 10z" fill="#c4c4c4" stroke="#444"/>
      <path d="M58 650l18 10h78l18-10z" fill="#969696"/>
      <path d="M112 650h34l-12 10h-8z" fill="#fff" stroke="#222"/>
      <path d="M118 650l10 8 14-8M123 650l6 5 8-5" fill="none" stroke="#222"/>
    </svg>

    <section class="dialog" role="dialog" aria-label="用户默认设置">
      <header class="dialog-title">
        <svg><use href="#i-gear"/></svg><h2>用户默认设置</h2>
        <button class="close" aria-label="关闭"><svg viewBox="0 0 12 12"><path d="M1 1l10 10M11 1L1 11" stroke="#fff" stroke-width="2"/></svg></button>
      </header>

      <form class="dialog-body">
        <div class="options">
          <label for="level">默认设置级别</label>
          <div class="select-box level"><select id="level"><option>用户</option></select></div>
          <label for="lock" class="muted">默认的锁定状态</label>
          <div class="select-box lock"><select id="lock" disabled><option>解锁</option></select></div>
          <label for="unit">单位制</label>
          <div class="select-box unit"><select id="unit"><option>公制</option></select></div>
          <button type="button" class="icon-button" aria-label="查找"><svg><use href="#i-bino"/></svg></button>
          <button type="button" class="icon-button" aria-label="管理"><svg><use href="#i-eye"/></svg></button>
        </div>

        <div class="panes">
          <div class="category">
            <ul>
              <li>基本环境</li><li>建模</li><li>草图</li><li>曲线</li><li>分析</li><li>装配</li><li>制图</li><li>PMI</li><li>加工</li>
              <li class="sub"><span>常规</span></li>
              <li class="sub"><span>用户界面</span></li>
              <li class="sub picked"><span>操作</span></li>
              <li class="sub"><span>几何体</span></li>
              <li class="sub"><span>选择</span></li>
              <li class="sub"><span>刀轨显示</span></li>
              <li class="sub"><span>仿真与可视化</span></li>
              <li class="sub"><span>后处理配置器</span></li>
              <li class="sub"><span>输出</span></li>
              <li class="sub"><span>刀具</span></li>
              <li class="sub"><span>铣刀</span></li>
              <li class="sub"><span>钻刀</span></li>
              <li class="sub"><span>车刀</span></li>
              <li class="sub end"><span>电极丝刀具</span></li>
              <li>Machine Tool Builder</li><li>仿真</li><li>运动分析</li><li>XY 函数</li>
            </ul>
            <div class="scrollbar half"><i class="up"></i><div class="track"><div class="thumb"></div></div><i class="down"></i></div>
          </div>

          <div class="settings">
            <div class="tabs" role="tablist">
              <button type="button" role="tab">常规</button>
              <button type="button" role="tab" class="selected" aria-selected="true">刀轨</button>
              <button type="button" role="tab">变换</button>
              <button type="button" role="tab">颜色</button>
              <button type="button" role="tab">优化进给率</button>
              <button type="button" role="tab">侧倾刀轴</button>
            </div>
            <div class="tab-panel">
              <div class="scroll-area">
                <div class="groups">
                  <section class="group">
                    <h3>刀轨重播</h3>
                    <div class="row"><label class="focus"><input type="checkbox" checked><span>在每一刀轨前刷新</span></label><button type="button" class="help" aria-label="帮助"><svg><use href="#i-help"/></svg></button></div>
                  </section>
                  <section class="group">
                    <h3>刀轨生成</h3>
                    <div class="row"><label><input type="checkbox" checked><span>在每一刀轨后暂停</span></label><button type="button" class="help" aria-label="帮助"><svg><use href="#i-help"/></svg></button></div>
                    <div class="row"><label><input type="checkbox" checked><span>在每一刀轨前刷新</span></label><button type="button" class="help" aria-label="帮助"><svg><use href="#i-help"/></svg></button></div>
                    <div class="row"><label><input type="checkbox"><span>生成 IPW 及刀轨</span></label><button type="button" class="help" aria-label="帮助"><svg><use href="#i-help"/></svg></button></div>
                    <div class="row"><label><input type="checkbox"><span>Save Smart Regeneration Data</span></label><button type="button" class="help" aria-label="帮助"><svg><use href="#i-help"/></svg></button></div>
                    <div class="row"><label><input type="checkbox"><span>Do Smart Regeneration when Possible</span></label><button type="button" class="help" aria-label="帮助"><svg><use href="#i-help"/></svg></button></div>
                    <div class="row"><label><input type="checkbox"><span>Force Regenerate</span></label><button type="button" class="help" aria-label="帮助"><svg><use href="#i-help"/></svg></button></div>
                  </section>
                  <section class="group">
                    <h3>刀轨并行生成</h3>
                    <div class="row"><label for="procs">并行进程最大数目</label><button type="button" class="help" aria-label="帮助"><svg><use href="#i-help"/></svg></button></div>
                    <div class="slider">
                      <div class="slider-value"><output for="procs">2</output></div>
                      <input id="procs" type="range" min="1" max="8" value="2">
                      <div class="slider-ends"><span>1</span><span>8</span></div>
                    </div>
                    <div class="row"><label><input type="checkbox"><span>创建多个工艺</span></label><button type="button" class="help" aria-label="帮助"><svg><use href="#i-help"/></svg></button></div>
                  </section>
                  <section class="group">
                    <h3>刀轨锁定</h3>
                    <div class="row"><label><input type="checkbox"><span>版本升级过程中锁定刀轨</span></label><button type="button" class="help" aria-label="帮助"><svg><use href="#i-help"/></svg></button></div>
                    <div class="row"><label><input type="checkbox" checked><span>允许覆盖锁定的刀轨</span></label><button type="button" class="help" aria-label="帮助"><svg><use href="#i-help"/></svg></button></div>
                  </section>
                </div>
                <div class="scrollbar full"><i class="up"></i><div class="track"><div class="thumb"></div></div><i class="down"></i></div>
              </div>
            </div>
          </div>
        </div>

        <footer class="actions">
          <button type="button" class="primary">确定</button>
          <button type="button">应用</button>
          <button type="button">取消</button>
        </footer>
      </form>
    </section>
  </div>
</main>

<div class="ribbon"><span class="ribbon-name">9SUG</span><span class="ribbon-slogan">学UG就上UG网</span></div>
</body>
</html>
```
FILE: styles.css
```css
* { box-sizing: border-box; }

body {
  margin: 0;
  height: 100vh;
  display: flex;
  flex-direction: column;
  overflow: hidden;
  background: #fff;
  color: #1e1e1e;
  font: 12px/20px "Noto Sans", "Noto Sans CJK SC", sans-serif;
}

button, input, select { font: inherit; color: inherit; }
button { border: 0; padding: 0; background: none; }
h1, h2, h3, ul { margin: 0; padding: 0; font-weight: normal; }
h1, h2 { font-size: 12px; }
ul { list-style: none; }
.defs { position: absolute; width: 0; height: 0; }

.title-bar { flex: none; height: 26px; padding: 3px 0 0 128px; white-space: pre; }

/* Menu bar */
.menu-bar {
  flex: none;
  display: flex;
  align-items: center;
  gap: 14px;
  height: 27px;
  padding: 0 0 2px 128px;
  background: #c8d7d5;
  font-size: 11px;
  white-space: nowrap;
}
.menu-bar a { color: inherit; text-decoration: none; }
.menu-bar .wide { margin-left: 10px; }
.menu-bar .latin { font-size: 12px; }

/* Toolbars */
.toolbar {
  flex: none;
  display: flex;
  align-items: center;
  overflow: hidden;
  border-bottom: 1px solid #dcdcdc;
}
.bar-standard { height: 32px; padding-left: 87px; }
.bar-cam { height: 26px; padding-left: 53px; }
.bar-select { height: 31px; padding-left: 8px; border-bottom: 0; }
.tb {
  flex: none;
  display: grid;
  place-items: center;
  width: 23px;
  height: 23px;
  color: #4454b4;
}
.tb svg { width: 16px; height: 16px; }
.tb.off { color: #b4b4b4; }
.tb.active { background: #c8d7d5; border: 1px solid #8fb0ac; }
.caret { flex: none; display: grid; place-items: center; width: 12px; height: 23px; }
.caret::before {
  content: "";
  border: 3px solid transparent;
  border-top-color: #111;
  border-bottom: 0;
}
.caret.low { padding-top: 10px; }
.sep { flex: none; width: 6px; height: 23px; }
.sep::before { content: ""; display: block; width: 1px; height: 100%; margin-left: 3px; background: #d0d0d0; }
.grip {
  flex: none;
  width: 10px;
  align-self: stretch;
  margin-left: 1px;
  margin-right: -1px;
  border-left: 1px solid #d0d0d0;
}
.grip::before {
  content: "";
  display: block;
  width: 3px;
  height: 100%;
  margin-left: 3px;
  background: repeating-linear-gradient(#fff 0 2px, #b4b4b4 2px 4px);
}
.search {
  flex: none;
  display: flex;
  align-items: center;
  width: 125px;
  height: 20px;
  margin: 0 4px 0 5px;
  border: 1px solid #999;
}
.search input { flex: 1; min-width: 0; height: 18px; padding: 0 1px; border: 0; font-size: 11px; outline: 0; }
.search svg { width: 16px; height: 16px; margin-right: 1px; }

/* Drop-downs */
.select-box { flex: none; position: relative; height: 25px; }
.select-box select {
  appearance: none;
  width: 100%;
  height: 100%;
  padding: 0 14px 0 4px;
  border: 1px solid #a6a6a6;
  border-radius: 0;
  background: #fff;
  opacity: 1;
}
.select-box select:disabled { color: #a0a0a0; }
.select-box::after {
  content: "";
  position: absolute;
  right: 5px;
  top: 50%;
  margin-top: -2px;
  border: 4px solid transparent;
  border-top-color: #111;
  border-bottom: 0;
  pointer-events: none;
}
.select-box:has(:disabled)::after { border-top-color: #999; }
.bar-select .select-box { height: 20px; font-size: 11px; }
.bar-select .select-box select { padding-left: 2px; }
.filter { width: 130px; }
.scope { width: 140px; margin: 0 2px 0 7px; }

/* Workspace */
.workspace { flex: 1; min-height: 0; display: flex; border-top: 1px solid #858c90; }

.rail { flex: none; width: 26px; background: #dcdcdc; overflow: hidden; }
.rail button { display: grid; place-items: center; width: 26px; height: 34px; padding-left: 5px; }
.rail svg { width: 16px; height: 16px; }
.rail .rail-gear { height: 28px; margin-bottom: 14px; padding: 0 4px 0 0; color: #333; }
.rail .apart { margin-top: 12px; }
.rail .current {
  width: 24px;
  height: 38px;
  margin: -2px 0 -2px 2px;
  padding-left: 3px;
  background: #fff;
  border: 1px solid #999;
  border-right: 0;
}

.navigator { flex: none; width: 175px; display: flex; flex-direction: column; padding: 0 9px 0 4px; }
.navigator header { display: flex; align-items: center; justify-content: space-between; height: 28px; padding: 0 7px 0 4px; }
.maximize { width: 12px; height: 11px; border: 1px solid #111; border-top-width: 2px; }
.nav-box { flex: 1; min-height: 0; display: flex; flex-direction: column; border: 1px solid #d4d4d4; border-bottom: 0; padding: 0 1px; }
.nav-box table { width: 100%; border-collapse: separate; border-spacing: 0; }
.nav-box th { height: 22px; padding: 0 6px; background: #f0f0f0; border-bottom: 1px solid #ccc; font-weight: normal; text-align: left; }
.nav-box td { height: 20px; padding: 0 3px; border-bottom: 1px solid #e8e8e8; line-height: 19px; }
.nav-box tbody tr:nth-child(even) td { background: #f9f9f9; }
.node td { position: relative; padding-left: 19px; }
.node span { display: flex; align-items: center; gap: 2px; }
.node svg { width: 16px; height: 16px; }
.node td::before, .node td::after { content: ""; position: absolute; left: 9px; }
.node td::before { top: 10px; width: 9px; border-top: 1px dotted #999; }
.node td::after { top: 0; height: 20px; border-left: 1px dotted #999; }
.node:not(.last) td::after { top: 10px; height: 10px; }
.node.last td::after { height: 10px; }
.nav-rest {
  flex: 1;
  background: repeating-linear-gradient(#f9f9f9 0 19px, #e8e8e8 19px 20px, #fff 20px 39px, #e8e8e8 39px 40px);
}

.viewport { flex: 1; min-width: 0; position: relative; display: flex; padding: 0 8px 7px 0; background: #58595b; }
.model { position: absolute; right: 0; top: 0; width: 200px; height: 660px; }

/* Dialog */
.dialog {
  position: relative;
  flex: 1;
  min-width: 0;
  display: flex;
  flex-direction: column;
  background: #e8e8e8;
  border: 1px solid #8d9498;
  border-width: 0 1px 1px 2px;
}
.dialog-title { flex: none; display: flex; align-items: center; gap: 9px; height: 24px; padding: 0 9px 0 7px; background: #5c8883; color: #fff; }
.dialog-title h2 { flex: 1; font-size: 13px; }
.dialog-title > svg { width: 15px; height: 15px; }
.close { display: grid; place-items: center; }
.close svg { width: 12px; height: 12px; }
.dialog-body { flex: 1; min-height: 0; display: flex; flex-direction: column; padding: 8px 9px 10px; }

.options { flex: none; display: flex; align-items: flex-start; justify-content: flex-end; gap: 2px; height: 34px; white-space: nowrap; }
.options label { line-height: 25px; }
.options .muted { color: #9a9a9a; }
.level { width: 115px; margin-left: 3px; }
.lock { width: 63px; margin-left: 3px; }
.unit { width: 51px; margin-left: 3px; }
.icon-button { display: grid; place-items: center; width: 32px; height: 32px; border: 1px solid #a6a6a6; }
.icon-button svg { width: 24px; height: 24px; }

.panes { flex: 1; min-height: 0; display: flex; gap: 3px; }
.category { flex: none; width: 250px; display: flex; background: #fff; border: 1px solid #d0d0d0; padding: 1px 0 1px 1px; }
.category ul { flex: 1; overflow: hidden; }
.category li { position: relative; height: 20px; padding-left: 3px; border-bottom: 1px solid #e8e8e8; line-height: 19px; }
.category li:nth-child(even) { background: #f9f9f9; }
.category .sub { padding-left: 19px; }
.sub span { display: block; padding-left: 3px; }
.sub::before, .sub::after { content: ""; position: absolute; left: 9px; }
.sub::before { top: 10px; width: 9px; border-top: 1px dotted #999; }
.sub::after { top: 0; height: 20px; border-left: 1px dotted #999; }
.sub.end::after { height: 10px; }
.picked span { background: #3399ff; color: #fff; }

.scrollbar { flex: none; width: 16px; margin-left: 1px; display: flex; flex-direction: column; background: #f2f2f2; }
.scrollbar i { display: grid; place-items: center; height: 18px; }
.scrollbar i::before { content: ""; border: 3px solid transparent; }
.scrollbar .up::before { border-top: 0; border-bottom-color: #444; }
.scrollbar .down::before { border-bottom: 0; border-top-color: #444; }
.track { flex: 1; }
.thumb {
  display: grid;
  place-items: center;
  width: 15px;
  border: 1px solid #939398;
  border-radius: 2px;
  background: linear-gradient(90deg, #f6f6f6, #dcdce0 50%, #bcbcc2);
}
.thumb::before { content: ""; width: 7px; height: 8px; background: repeating-linear-gradient(#666 0 1px, #eee 1px 2px); }
.half .thumb { height: 52%; }
.full .thumb { height: 97%; }

.settings { flex: 1; min-width: 0; display: flex; flex-direction: column; }
.tabs { flex: none; display: flex; align-items: flex-end; height: 31px; padding-left: 1px; }
.tabs button {
  height: 28px;
  margin-bottom: 1px;
  padding: 0 12px;
  border: 1px solid #d0d0d0;
  border-width: 2px 1px 0;
  background: #e8e8e8;
}
.tabs button:nth-child(n+5) { padding: 0 7px; }
.tabs .selected { position: relative; z-index: 1; height: 32px; margin-bottom: -1px; padding: 0 15px 3px; border-color: #bbb; border-width: 1px; border-bottom: 0; background: #fff; color: #2a82b8; }
.tab-panel { flex: 1; min-height: 0; display: flex; padding: 4px 6px 6px 5px; margin-top: -1px; background: #fff; border: 1px solid #b8b8b8; }
.scroll-area { flex: 1; min-width: 0; display: flex; gap: 4px; border: 1px solid #d0d0d0; }
.groups { flex: 1; min-width: 0; overflow: hidden; padding-left: 2px; }
.group { padding: 0 13px 8px 9px; border-bottom: 2px solid #d0d0d0; border-right: 1px solid #e8e8e8; }
.group h3 { height: 24px; color: #2a82b8; font-size: 14px; line-height: 24px; }
.row { display: flex; align-items: center; justify-content: space-between; height: 28px; }
.row label { display: flex; align-items: center; gap: 5px; }
.row label span { padding: 0 1px; }
.row .focus span { outline: 1px dotted #111; }
.row input {
  appearance: none;
  display: grid;
  place-items: center;
  width: 13px;
  height: 13px;
  margin: 0;
  border: 1px solid #868686;
  background: linear-gradient(135deg, #cfd3da, #f8f8f8);
  box-shadow: inset 0 0 0 1px #f4f4f4;
}
.row input:checked::before {
  content: "";
  width: 9px;
  height: 9px;
  background: #3a4f98;
  clip-path: polygon(0 45%, 22% 38%, 40% 62%, 80% 0, 100% 8%, 48% 100%, 32% 100%);
}
.help { display: grid; }
.help svg { width: 20px; height: 24px; }

.slider { height: 63px; padding: 0 5px 0 9px; }
.slider-value { height: 15px; padding-left: 58px; line-height: 15px; }
.slider input { appearance: none; display: block; width: 100%; height: 31px; margin: 0; background: none; }
.slider input::-webkit-slider-runnable-track { height: 4px; background: #adadad; }
.slider input::-webkit-slider-thumb { appearance: none; width: 11px; height: 22px; margin-top: -9px; border: 1px solid #555; background: #a9c3c0; }
.slider-ends { display: flex; justify-content: space-between; margin: 0 -8px 0 -4px; line-height: 12px; }

.actions { flex: none; display: flex; justify-content: flex-end; gap: 5px; padding: 12px 6px 0 0; }
.actions button { width: 54px; height: 25px; border: 1px solid #a8a8ac; background: #c9c9cf; }
.actions .primary { border-color: #4a9fcc; background: #9ccce6; }

/* Corner ribbon */
.ribbon {
  position: absolute;
  left: 5px;
  top: 5px;
  width: 150px;
  height: 150px;
  background: #f00;
  clip-path: polygon(0 0, 100% 0, 0 100%);
  font-family: "Liberation Sans", "Noto Sans CJK SC", sans-serif;
  font-weight: bold;
  white-space: nowrap;
}
.ribbon span { position: absolute; transform: translate(-50%, -50%) rotate(-45deg); line-height: 30px; }
.ribbon-name { left: 32px; top: 33px; color: #000; font-size: 25px; }
.ribbon-slogan { left: 63px; top: 64px; color: #fff; font-size: 22px; }
```
